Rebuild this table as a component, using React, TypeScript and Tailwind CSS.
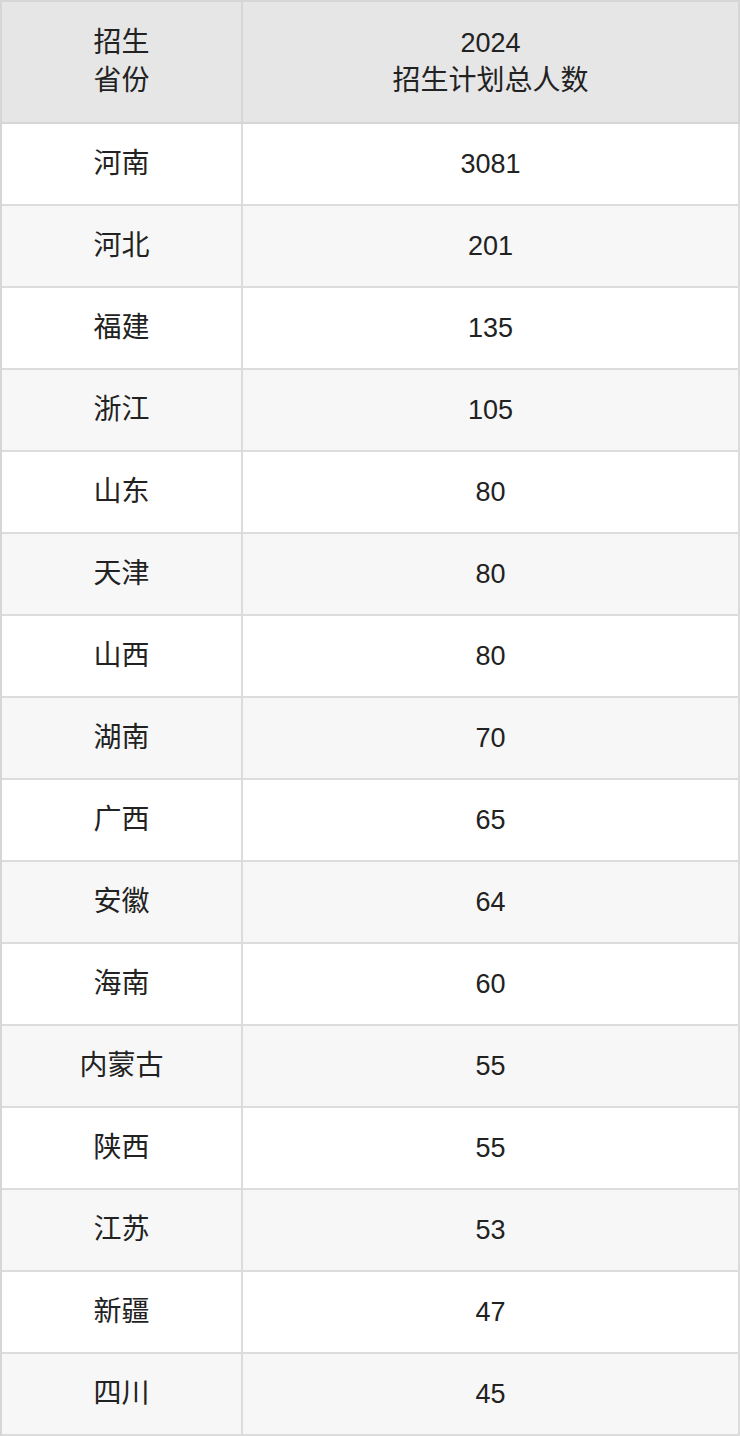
const rows: [string, string][] = [
  ['河南', '3081'],
  ['河北', '201'],
  ['福建', '135'],
  ['浙江', '105'],
  ['山东', '80'],
  ['天津', '80'],
  ['山西', '80'],
  ['湖南', '70'],
  ['广西', '65'],
  ['安徽', '64'],
  ['海南', '60'],
  ['内蒙古', '55'],
  ['陕西', '55'],
  ['江苏', '53'],
  ['新疆', '47'],
  ['四川', '45'],
];

export default function App() {
  return (
    <div
      className="w-[740px] bg-white text-[28px] text-[#222]"
      style={{ fontFamily: '"Liberation Sans", "Noto Sans CJK SC", sans-serif' }}
    >
      <div className="border-l-2 border-t-2 border-[#d6d6d6]">
        <div className="flex h-[122px] bg-[#e6e6e6]">
          <div className="flex w-[241px] flex-col items-center justify-center border-r-2 border-b-2 border-[#d6d6d6] leading-[38px]">
            <span>招生</span>
            <span>省份</span>
          </div>
          <div className="flex flex-1 flex-col items-center justify-center border-r-2 border-b-2 border-[#d6d6d6] leading-[38px]">
            <span className="text-[27px]">2024</span>
            <span>招生计划总人数</span>
          </div>
        </div>
        {rows.map(([province, count], i) => (
          <div key={province} className={`flex h-[82px] ${i % 2 === 0 ? 'bg-white' : 'bg-[#f7f7f7]'}`}>
            <div className="flex w-[241px] items-center justify-center border-r-2 border-b-2 border-[#dcdcdc]">
              {province}
            </div>
            <div className="flex flex-1 items-center justify-center border-r-2 border-b-2 border-[#dcdcdc] text-[27px]">
              {count}
            </div>
          </div>
        ))}
      </div>
    </div>
  );
}
